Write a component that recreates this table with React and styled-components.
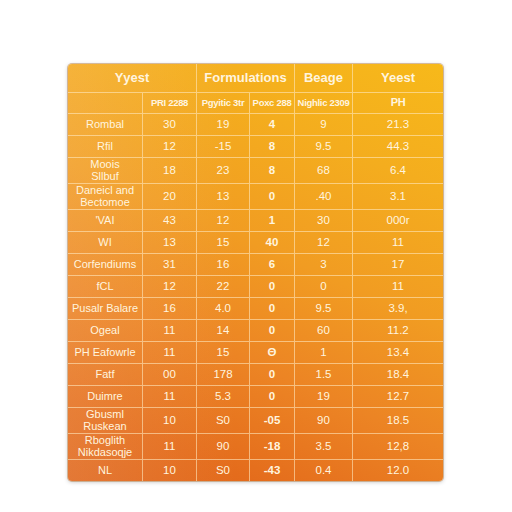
import React from "react";
import styled, { createGlobalStyle } from "styled-components";

const Global = createGlobalStyle`
  html, body { margin: 0; padding: 0; background: #ffffff; }
  body { font-family: "Liberation Sans", Arial, sans-serif; }
`;

const Page = styled.div`
  width: 512px;
  height: 512px;
  padding: 64px 0 0 68px;
  box-sizing: border-box;
`;

const Card = styled.div`
  width: 375px;
  border-radius: 4px;
  overflow: hidden;
  background: linear-gradient(204deg, #f7b91a 0%, #f4ad1e 22%, #f19c22 45%, #ec8424 66%, #e46c1c 86%, #de621a 100%);
  box-shadow: 0 0 0 1px rgba(190, 140, 90, 0.55), 0 1px 4px rgba(0, 0, 0, 0.25);
  position: relative;
  &::before {
    content: "";
    position: absolute;
    inset: 0;
    background: linear-gradient(90deg, rgba(255, 236, 200, 0.16) 0%, rgba(255, 236, 200, 0) 45%);
    pointer-events: none;
  }
`;

const Row = styled.div`
  display: grid;
  grid-template-columns: 75px 54px 53px 45px 58px 90px;
  height: ${(p) => p.$h}px;
  border-bottom: 1px solid rgba(255, 232, 190, 0.6);
  &:last-child { border-bottom: none; }
`;

const Cell = styled.div`
  grid-column: ${(p) => p.$span || "auto"};
  display: flex;
  align-items: center;
  justify-content: center;
  text-align: center;
  color: #fff4df;
  font-size: ${(p) => p.$size || 11.5}px;
  font-weight: ${(p) => (p.$bold ? 700 : 400)};
  line-height: 1.05;
  letter-spacing: ${(p) => p.$ls || 0}px;
  border-right: 1px solid rgba(255, 232, 190, 0.6);
  &:last-child { border-right: none; }
  position: relative;
`;

const header = [
  { t: "Yyest", span: "1 / 3" },
  { t: "Formulations", span: "3 / 5" },
  { t: "Beage", span: "5 / 6" },
  { t: "Yeest", span: "6 / 7" },
];

const sub = ["", "PRI 2288", "Pgyitic 3tr", "Poxc 288", "Nighlic 2309", "PH"];

const rows = [
  ["Rombal", "30", "19", "4", "9", "21.3"],
  ["Rfil", "12", "-15", "8", "9.5", "44.3"],
  ["Moois\nSllbuf", "18", "23", "8", "68", "6.4"],
  ["Daneicl and\nBectomoe", "20", "13", "0", ".40", "3.1"],
  ["'VAI", "43", "12", "1", "30", "000r"],
  ["WI", "13", "15", "40", "12", "11"],
  ["Corfendiums", "31", "16", "6", "3", "17"],
  ["fCL", "12", "22", "0", "0", "11"],
  ["Pusalr Balare", "16", "4.0", "0", "9.5", "3.9,"],
  ["Ogeal", "11", "14", "0", "60", "11.2"],
  ["PH Eafowrle", "11", "15", "Θ", "1", "13.4"],
  ["Fatf", "00", "178", "0", "1.5", "18.4"],
  ["Duimre", "11", "5.3", "0", "19", "12.7"],
  ["Gbusml\nRuskean", "10", "S0", "-05", "90", "18.5"],
  ["Rboglith\nNikdasoqje", "11", "90", "-18", "3.5", "12,8"],
  ["NL", "10", "S0", "-43", "0.4", "12.0"],
];

const Label = ({ text }) =>
  text.split("\n").map((l, i) => (
    <React.Fragment key={i}>
      {i > 0 && <br />}
      {l}
    </React.Fragment>
  ));

export default function App() {
  return (
    <>
      <Global />
      <Page>
        <Card>
          <Row $h={28}>
            {header.map((h) => (
              <Cell key={h.t} $span={h.span} $bold $size={13}>
                {h.t}
              </Cell>
            ))}
          </Row>
          <Row $h={20}>
            {sub.map((s, i) => (
              <Cell key={i} $bold $size={i === 5 ? 11 : 9.5} $ls={-0.3}>
                {s}
              </Cell>
            ))}
          </Row>
          {rows.map((r, i) => {
            const dbl = r[0].includes("\n");
            return (
              <Row key={i} $h={dbl ? 25 : 21}>
                {r.map((v, j) => (
                  <Cell key={j} $bold={j === 3} $size={j === 0 ? 11 : 11.5}>
                    {j === 0 ? <Label text={v} /> : v}
                  </Cell>
                ))}
              </Row>
            );
          })}
        </Card>
      </Page>
    </>
  );
}
